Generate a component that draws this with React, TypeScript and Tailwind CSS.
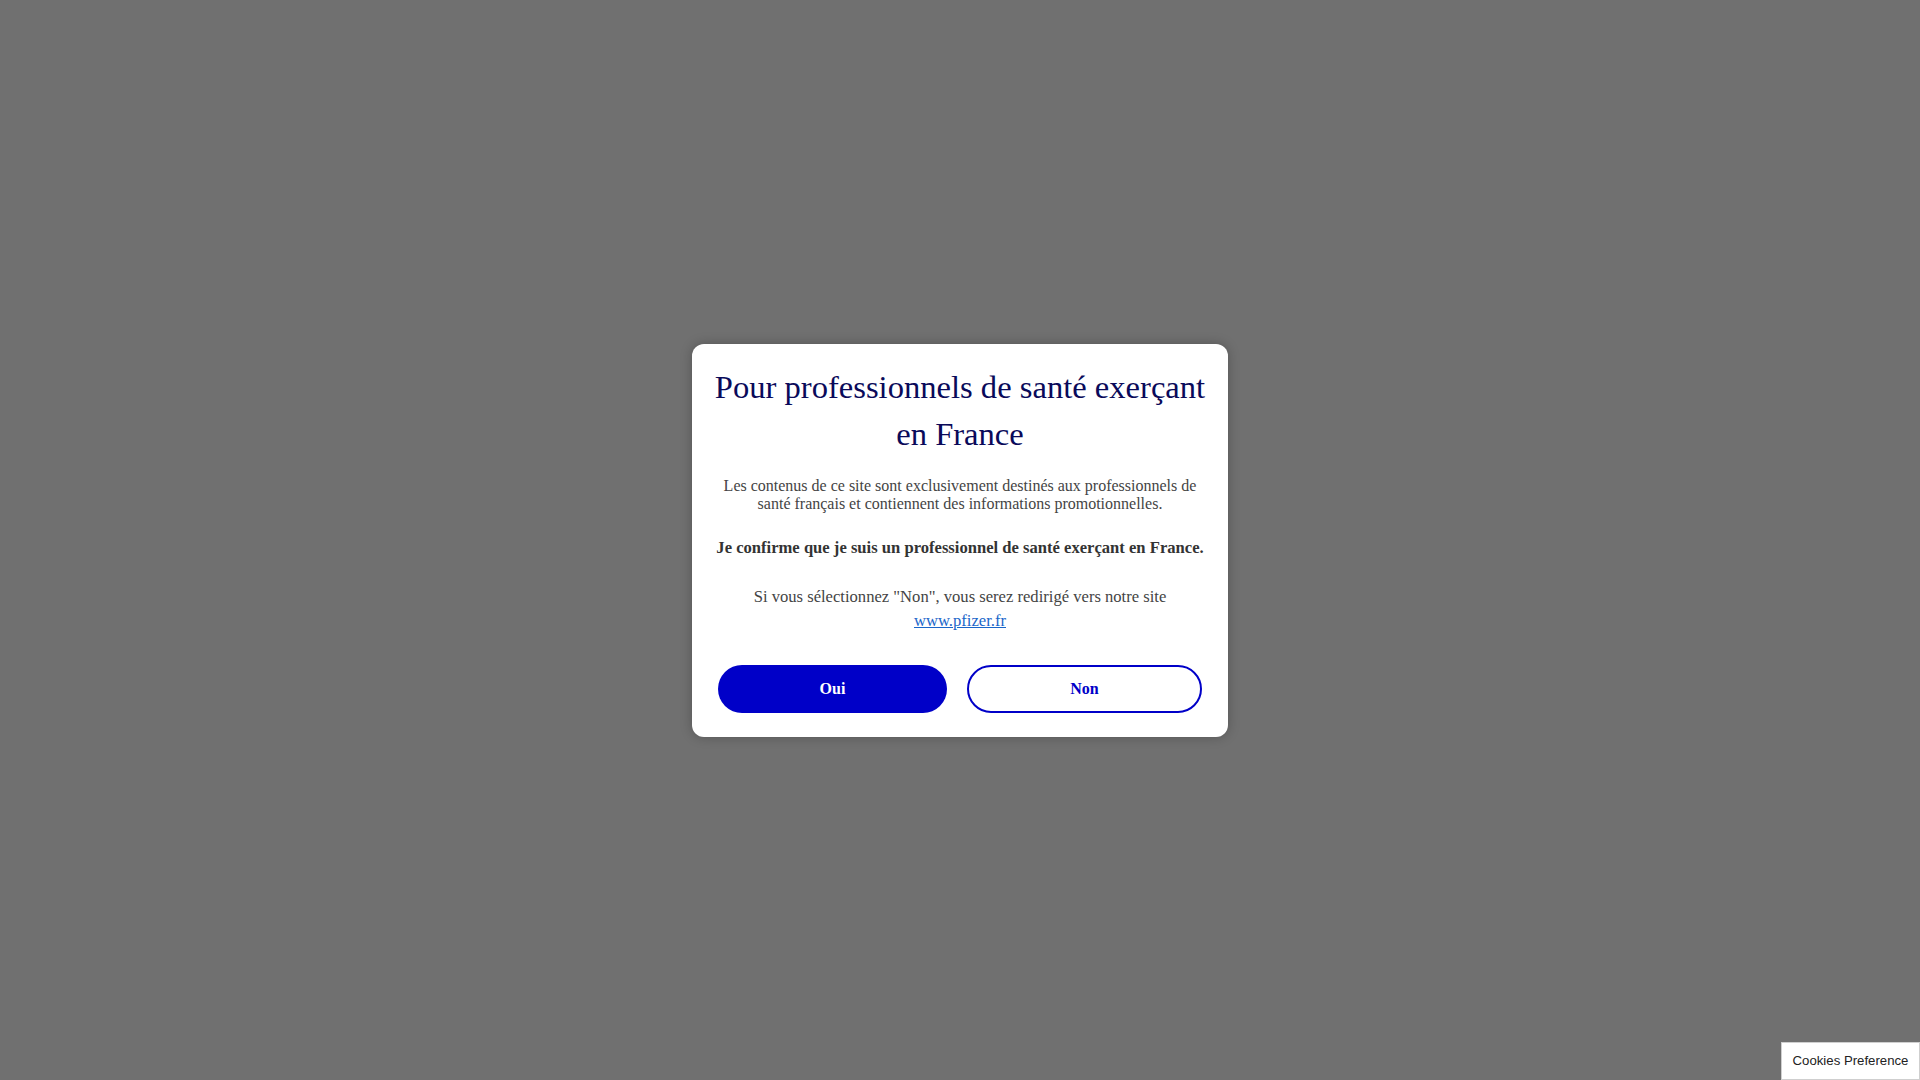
import React from "react";

export default function App() {
  return (
    <div
      className="relative flex h-screen w-full items-center justify-center bg-[#707070]"
      style={{ fontFamily: '"Liberation Serif", "Times New Roman", serif' }}
    >
      <div className="w-[536px] rounded-[12px] bg-white px-[20px] pt-[20px] pb-[24px] text-center shadow-[0_0_12px_rgba(0,0,0,0.25)]">
        <h1 className="text-[32.6px] font-normal leading-[47px] text-[#0a0a5a]">
          Pour professionnels de santé exerçant en France
        </h1>
        <p className="mt-[19px] text-[16px] leading-[18px] text-[#444444]">
          Les contenus de ce site sont exclusivement destinés aux professionnels de santé français et contiennent des informations promotionnelles.
        </p>
        <p className="mt-[26px] text-[16.6px] font-bold leading-[18px] text-[#333333]">
          Je confirme que je suis un professionnel de santé exerçant en France.
        </p>
        <p className="mt-[28px] text-[16.6px] leading-[24px] text-[#444444]">
          Si vous sélectionnez "Non", vous serez redirigé vers notre site
          <br />
          <a href="#" className="text-[#1a66c9] underline">
            www.pfizer.fr
          </a>
        </p>
        <div className="mt-[32px] flex gap-[20px] px-[6px]">
          <button className="h-[48px] w-[229px] rounded-full bg-[#0000c8] text-[16px] font-bold text-white">
            Oui
          </button>
          <button className="h-[48px] w-[235px] rounded-full border-2 border-[#0000c8] bg-white text-[16px] font-bold text-[#0000c8]">
            Non
          </button>
        </div>
      </div>
      <button
        className="absolute bottom-0 right-0 h-[38px] w-[139px] border border-[#cfcfcf] bg-white text-[13.2px] text-[#222222]"
        style={{ fontFamily: '"Liberation Sans", Arial, sans-serif' }}
      >
        Cookies Preference
      </button>
    </div>
  );
}
